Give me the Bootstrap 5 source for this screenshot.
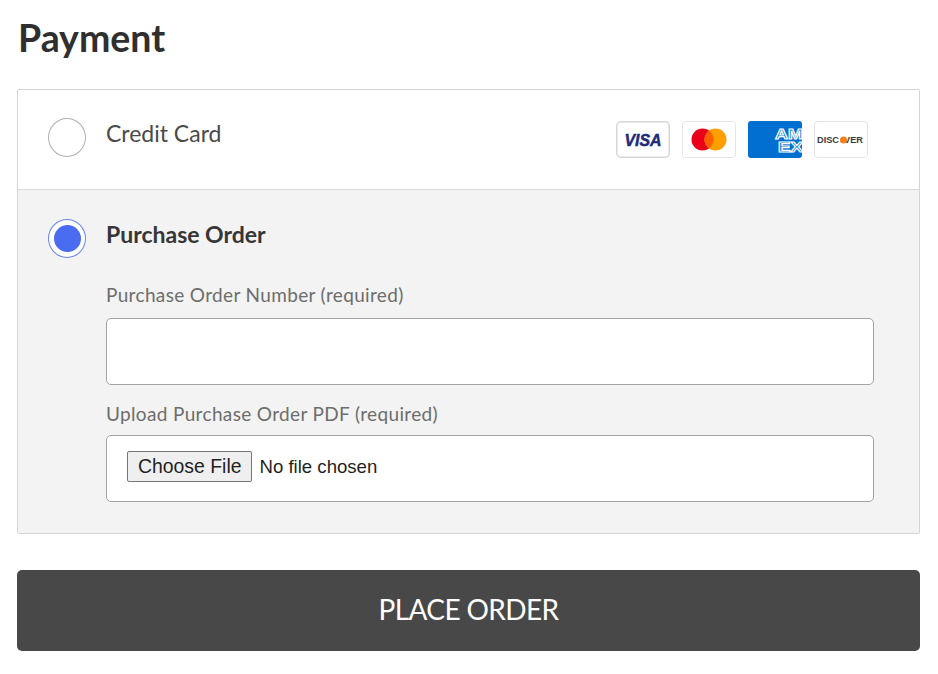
<!DOCTYPE html>
<html lang="en">
<head>
<meta charset="utf-8">
<title>Payment</title>
<link href="https://cdn.jsdelivr.net/npm/bootstrap@5.3.0/dist/css/bootstrap.min.css" rel="stylesheet">
<style>
body{font-family:Lato,"Liberation Sans",sans-serif;background:#fff;color:#333;margin:0}
.pay-page{padding:16px 18px 0 17px}
.pay-title{font-family:Lato,sans-serif;font-size:37.5px;font-weight:700;line-height:44px;margin:0 0 29px 1px;color:#2f2f2f}
.pay-box{border:1px solid #d5d5d5;border-radius:2px}
.pay-row{padding:28px 30px 0 30px;gap:20px}
.row-card{height:100px;background:#fff;border-bottom:1px solid #d8d8d8}
.row-po{height:343px;background:#f3f3f3;padding-top:29px}
.pay-radio{width:38px;height:39px;border-radius:50%;border:1.5px solid #b0b0b0;background:#fff;flex:none;display:flex;align-items:center;justify-content:center}
.pay-radio.on{border:1.5px solid #6a86f2}
.pay-dot{width:27px;height:27px;border-radius:50%;background:#4a6cf0}
.pay-name{font-size:23px;line-height:32px;color:#4a4a4a;margin-top:-1px}
.pay-name.sel{font-weight:700;color:#363636;margin-top:-1px}
.card-set{gap:12px;margin-left:auto;margin-right:21px;margin-top:3px}
.card-ic{width:54px;height:37px;display:block}
.po-form{margin-top:33px;width:768px}
.po-label{display:block;font-size:19px;letter-spacing:.35px;line-height:24px;color:#6d6d6d;margin:0 0 11px}
.po-input{display:block;width:100%;height:67px;background:#fff;border:1px solid #a3a3a3;border-radius:5px;margin-bottom:17px}
.po-file{display:flex;align-items:center;height:67px;background:#fff;border:1px solid #a3a3a3;border-radius:5px;padding:0 20px 5px}
.po-file input{font-family:"Liberation Sans",Arial,sans-serif;font-size:18.6px;color:#1f1f1f;width:100%}
.po-file input::file-selector-button{font-size:19.4px;padding:0 10px;height:31px;margin-right:7px;border:1px solid #767676;border-radius:2px;background:#efefef;color:#1f1f1f}
.po-label.second{margin-bottom:9px}
.place-btn{display:block;width:100%;height:81px;margin-top:36px;padding-bottom:10px;background:#484848;border:0;border-radius:5px;color:#fff;font-size:28px;letter-spacing:-.6px}
.place-btn:hover{background:#484848;color:#fff}
</style>
</head>
<body>
<div class="pay-page">
  <h1 class="pay-title">Payment</h1>
  <div class="pay-box">
    <div class="pay-row row-card d-flex align-items-start">
      <span class="pay-radio"></span>
      <div class="pay-name">Credit Card</div>
      <div class="card-set d-flex">
        <svg class="card-ic" viewBox="0 0 54 37"><rect x=".75" y=".75" width="52.5" height="35.5" rx="4" fill="#fff" stroke="#d6d6d6" stroke-width="1.5"/><text x="27" y="24.5" text-anchor="middle" font-family="Liberation Sans,sans-serif" font-size="17" font-weight="700" font-style="italic" fill="#1f2a78" stroke="#1f2a78" stroke-width=".5" textLength="37" lengthAdjust="spacingAndGlyphs">VISA</text></svg>
        <svg class="card-ic" viewBox="0 0 54 37"><rect x=".5" y=".5" width="53" height="36" rx="3" fill="#fff" stroke="#e4e4e4"/><circle cx="20.5" cy="18.5" r="11" fill="#eb001b"/><circle cx="33.5" cy="18.5" r="11" fill="#ff9f00"/><path d="M27 9.6a11 11 0 0 1 0 17.8a11 11 0 0 1 0-17.8z" fill="#ff5f00"/></svg>
        <svg class="card-ic" viewBox="0 0 54 37"><defs><clipPath id="amexclip"><rect width="54" height="37" rx="3"/></clipPath></defs><g clip-path="url(#amexclip)"><rect width="54" height="37" fill="#016fd0"/><text x="27" y="18" font-family="Liberation Sans,sans-serif" font-size="15.5" font-weight="700" fill="#016fd0" stroke="#fff" stroke-width="1.1" textLength="28" lengthAdjust="spacingAndGlyphs">AM</text><text x="30" y="30.5" font-family="Liberation Sans,sans-serif" font-size="15.5" font-weight="700" fill="#016fd0" stroke="#fff" stroke-width="1.1" textLength="25" lengthAdjust="spacingAndGlyphs">EX</text></g></svg>
        <svg class="card-ic" viewBox="0 0 54 37"><rect x=".5" y=".5" width="53" height="36" rx="3" fill="#fff" stroke="#e4e4e4"/><text x="3" y="22" font-family="Liberation Sans,sans-serif" font-size="8.5" font-weight="700" fill="#3c3c3c" textLength="46" lengthAdjust="spacingAndGlyphs">DISC&#160;&#160;VER</text><circle cx="29.5" cy="19" r="3.6" fill="#f58220"/></svg>
      </div>
    </div>
    <div class="pay-row row-po d-flex align-items-start">
      <span class="pay-radio on"><span class="pay-dot"></span></span>
      <div>
        <div class="pay-name sel">Purchase Order</div>
        <div class="po-form">
          <label class="po-label" for="po-num">Purchase Order Number (required)</label>
          <input class="po-input" id="po-num" type="text">
          <label class="po-label second" for="po-pdf">Upload Purchase Order PDF (required)</label>
          <div class="po-file"><input id="po-pdf" type="file"></div>
        </div>
      </div>
    </div>
  </div>
  <button class="btn place-btn" type="button">PLACE ORDER</button>
</div>
</body>
</html>
